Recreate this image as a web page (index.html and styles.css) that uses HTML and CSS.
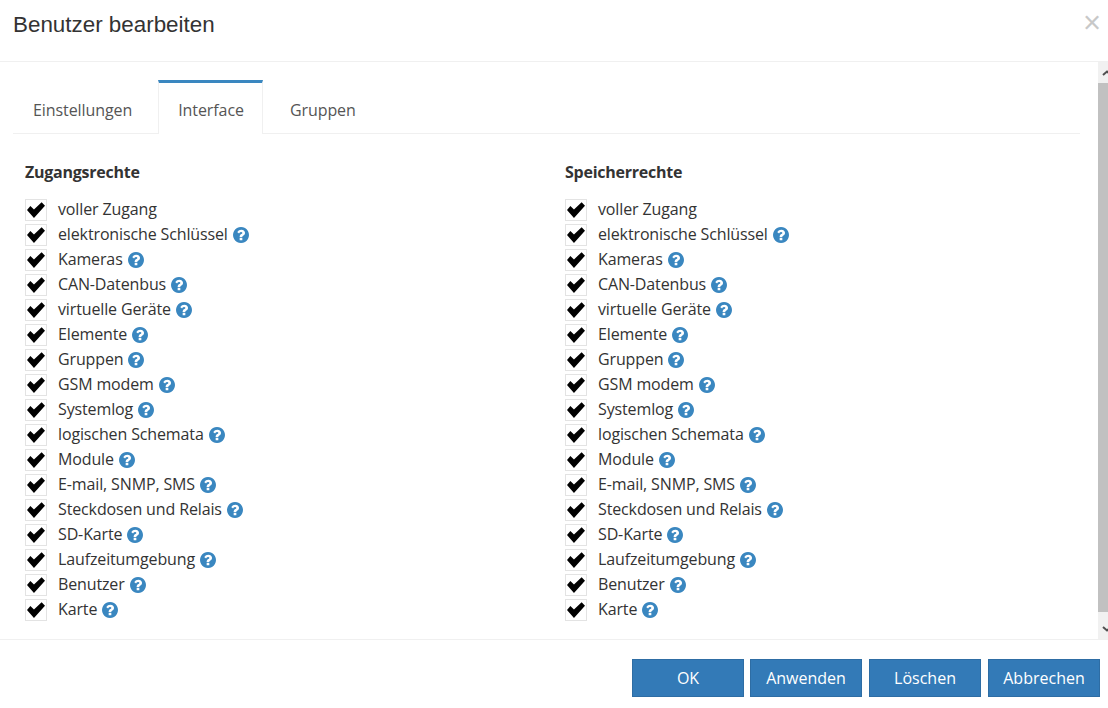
FILE: index.html
```html
<!DOCTYPE html>
<html lang="de">
<head>
<meta charset="utf-8">
<title>Benutzer bearbeiten</title>
<link rel="stylesheet" href="styles.css">
</head>
<body>
<svg class="defs" width="0" height="0" aria-hidden="true">
  <symbol id="help" viewBox="128 128 1536 1536">
    <path fill="#3a87c0" d="M1024 1376v-192q0-14-9-23t-23-9h-192q-14 0-23 9t-9 23v192q0 14 9 23t23 9h192q14 0 23-9t9-23zm256-672q0-88-55.500-163t-138.500-116-170-41q-243 0-371 213-15 24 8 42l132 100q7 6 19 6 16 0 25-12 53-68 86-92 34-24 86-24 48 0 85.500 26t37.500 59q0 38-20 61t-68 45q-63 28-115.500 86.500t-52.500 125.500v36q0 14 9 23t23 9h192q14 0 23-9t9-23q0-19 21.500-49.500t54.500-49.500q32-18 49-28.500t46-35 44.500-48 28-60.500 12.500-81zm384 192q0 209-103 385.500t-279.500 279.500-385.500 103-385.500-103-279.500-279.500-103-385.500 103-385.500 279.500-279.500 385.500-103 385.500 103 279.500 279.500 103 385.500z"/>
  </symbol>
  <symbol id="check" viewBox="0 0 16 14">
    <path d="M0 7 3 3.500 6.200 6.500 13 0 16 3.200 6.200 14z" fill="#000"/>
  </symbol>
</svg>
<div class="dialog">
  <header class="head">
    <h1 class="title">Benutzer bearbeiten</h1>
    <span class="close">×</span>
  </header>
  <main class="body">
    <div class="content">
      <nav class="tabs">
        <a class="tab">Einstellungen</a>
        <a class="tab active">Interface</a>
        <a class="tab">Gruppen</a>
      </nav>
      <div class="cols" id="cols">
        <section class="col">
          <h2 class="col-title">Zugangsrechte</h2>
          <ul class="list">
            <li class="row"><span class="box"><svg class="tick"><use href="#check"/></svg></span><span>voller Zugang</span></li>
            <li class="row"><span class="box"><svg class="tick"><use href="#check"/></svg></span><span>elektronische Schlüssel</span><svg class="help"><use href="#help"/></svg></li>
            <li class="row"><span class="box"><svg class="tick"><use href="#check"/></svg></span><span>Kameras</span><svg class="help"><use href="#help"/></svg></li>
            <li class="row"><span class="box"><svg class="tick"><use href="#check"/></svg></span><span>CAN-Datenbus</span><svg class="help"><use href="#help"/></svg></li>
            <li class="row"><span class="box"><svg class="tick"><use href="#check"/></svg></span><span>virtuelle Geräte</span><svg class="help"><use href="#help"/></svg></li>
            <li class="row"><span class="box"><svg class="tick"><use href="#check"/></svg></span><span>Elemente</span><svg class="help"><use href="#help"/></svg></li>
            <li class="row"><span class="box"><svg class="tick"><use href="#check"/></svg></span><span>Gruppen</span><svg class="help"><use href="#help"/></svg></li>
            <li class="row"><span class="box"><svg class="tick"><use href="#check"/></svg></span><span>GSM modem</span><svg class="help"><use href="#help"/></svg></li>
            <li class="row"><span class="box"><svg class="tick"><use href="#check"/></svg></span><span>Systemlog</span><svg class="help"><use href="#help"/></svg></li>
            <li class="row"><span class="box"><svg class="tick"><use href="#check"/></svg></span><span>logischen Schemata</span><svg class="help"><use href="#help"/></svg></li>
            <li class="row"><span class="box"><svg class="tick"><use href="#check"/></svg></span><span>Module</span><svg class="help"><use href="#help"/></svg></li>
            <li class="row"><span class="box"><svg class="tick"><use href="#check"/></svg></span><span>E-mail, SNMP, SMS</span><svg class="help"><use href="#help"/></svg></li>
            <li class="row"><span class="box"><svg class="tick"><use href="#check"/></svg></span><span>Steckdosen und Relais</span><svg class="help"><use href="#help"/></svg></li>
            <li class="row"><span class="box"><svg class="tick"><use href="#check"/></svg></span><span>SD-Karte</span><svg class="help"><use href="#help"/></svg></li>
            <li class="row"><span class="box"><svg class="tick"><use href="#check"/></svg></span><span>Laufzeitumgebung</span><svg class="help"><use href="#help"/></svg></li>
            <li class="row"><span class="box"><svg class="tick"><use href="#check"/></svg></span><span>Benutzer</span><svg class="help"><use href="#help"/></svg></li>
            <li class="row"><span class="box"><svg class="tick"><use href="#check"/></svg></span><span>Karte</span><svg class="help"><use href="#help"/></svg></li>
          </ul>
        </section>
        <section class="col">
          <h2 class="col-title">Speicherrechte</h2>
          <ul class="list">
            <li class="row"><span class="box"><svg class="tick"><use href="#check"/></svg></span><span>voller Zugang</span></li>
            <li class="row"><span class="box"><svg class="tick"><use href="#check"/></svg></span><span>elektronische Schlüssel</span><svg class="help"><use href="#help"/></svg></li>
            <li class="row"><span class="box"><svg class="tick"><use href="#check"/></svg></span><span>Kameras</span><svg class="help"><use href="#help"/></svg></li>
            <li class="row"><span class="box"><svg class="tick"><use href="#check"/></svg></span><span>CAN-Datenbus</span><svg class="help"><use href="#help"/></svg></li>
            <li class="row"><span class="box"><svg class="tick"><use href="#check"/></svg></span><span>virtuelle Geräte</span><svg class="help"><use href="#help"/></svg></li>
            <li class="row"><span class="box"><svg class="tick"><use href="#check"/></svg></span><span>Elemente</span><svg class="help"><use href="#help"/></svg></li>
            <li class="row"><span class="box"><svg class="tick"><use href="#check"/></svg></span><span>Gruppen</span><svg class="help"><use href="#help"/></svg></li>
            <li class="row"><span class="box"><svg class="tick"><use href="#check"/></svg></span><span>GSM modem</span><svg class="help"><use href="#help"/></svg></li>
            <li class="row"><span class="box"><svg class="tick"><use href="#check"/></svg></span><span>Systemlog</span><svg class="help"><use href="#help"/></svg></li>
            <li class="row"><span class="box"><svg class="tick"><use href="#check"/></svg></span><span>logischen Schemata</span><svg class="help"><use href="#help"/></svg></li>
            <li class="row"><span class="box"><svg class="tick"><use href="#check"/></svg></span><span>Module</span><svg class="help"><use href="#help"/></svg></li>
            <li class="row"><span class="box"><svg class="tick"><use href="#check"/></svg></span><span>E-mail, SNMP, SMS</span><svg class="help"><use href="#help"/></svg></li>
            <li class="row"><span class="box"><svg class="tick"><use href="#check"/></svg></span><span>Steckdosen und Relais</span><svg class="help"><use href="#help"/></svg></li>
            <li class="row"><span class="box"><svg class="tick"><use href="#check"/></svg></span><span>SD-Karte</span><svg class="help"><use href="#help"/></svg></li>
            <li class="row"><span class="box"><svg class="tick"><use href="#check"/></svg></span><span>Laufzeitumgebung</span><svg class="help"><use href="#help"/></svg></li>
            <li class="row"><span class="box"><svg class="tick"><use href="#check"/></svg></span><span>Benutzer</span><svg class="help"><use href="#help"/></svg></li>
            <li class="row"><span class="box"><svg class="tick"><use href="#check"/></svg></span><span>Karte</span><svg class="help"><use href="#help"/></svg></li>
          </ul>
        </section>
      </div>
    </div>
    <div class="scrollbar">
      <div class="sb-btn"><svg class="sb-arrow" viewBox="0 0 10 6"><path d="M1 5 5 1.500 9 5" fill="none" stroke="#505050" stroke-width="2"/></svg></div>
      <div class="sb-thumb"></div>
      <div class="sb-btn"><svg class="sb-arrow" viewBox="0 0 10 6"><path d="M1 1 5 4.500 9 1" fill="none" stroke="#505050" stroke-width="2"/></svg></div>
    </div>
  </main>
  <footer class="foot">
    <button class="btn">OK</button>
    <button class="btn">Anwenden</button>
    <button class="btn">Löschen</button>
    <button class="btn">Abbrechen</button>
  </footer>
</div>
</body>
</html>
```

FILE: styles.css
```css
html, body {
  margin: 0;
  padding: 0;
  height: 100%;
  overflow: hidden;
  background: #fff;
}
.defs { display: block; height: 0; }
.dialog {
  width: 1108px;
  height: 708px;
  display: flex;
  flex-direction: column;
  font-family: "Open Sans", sans-serif;
  font-size: 16px;
  color: #333;
}
.head {
  height: 61px;
  flex: none;
  border-bottom: 1px solid #f0f0f0;
  display: flex;
  justify-content: space-between;
  padding: 0 7px 0 13px;
}
.title {
  margin: 0;
  font-family: "Liberation Sans", Arial, sans-serif;
  font-size: 22.4px;
  font-weight: 400;
  line-height: 50px;
}
.close {
  font-family: "Liberation Sans", Arial, sans-serif;
  font-size: 31px;
  line-height: 46px;
  color: #c8c8c8;
}
.body {
  flex: none;
  height: 577px;
  display: flex;
  overflow: hidden;
}
.content {
  flex: 1;
  padding: 18px 18px 0 13px;
  min-width: 0;
}
.tabs {
  display: flex;
  gap: 7px;
  height: 54px;
  box-sizing: border-box;
  border-bottom: 1px solid #f0f0f0;
}
.tab {
  padding: 0 18px 0 19px;
  height: 54px;
  box-sizing: border-box;
  line-height: 54px;
  letter-spacing: -0.08px;
  color: #555;
  border: 1px solid transparent;
  border-width: 3px 1px 0;
}
.tab.active {
  background: #fff;
  border-color: #3a87c0 #f0f0f0 #fff;
}
.cols {
  display: grid;
  grid-template-columns: 540px 1fr;
  padding: 25px 0 0 12px;
}
.col-title {
  margin: 0 0 11px;
  font-size: 16px;
  font-weight: 700;
  line-height: 27px;
  letter-spacing: -0.25px;
  color: #333;
}
.list {
  list-style: none;
  margin: 0;
  padding: 0;
  letter-spacing: -0.13px;
}
.row {
  height: 25px;
  display: flex;
  align-items: center;
  line-height: 25px;
}
.box {
  width: 22px;
  height: 22px;
  box-sizing: border-box;
  border: 1px solid #e3e3e3;
  margin-right: 11px;
  display: flex;
  align-items: center;
  justify-content: center;
  flex: none;
}
.tick { width: 18px; height: 16px; }
.help {
  width: 16px;
  height: 16px;
  margin-left: 5px;
  flex: none;
}
.scrollbar {
  width: 10px;
  flex: none;
  background: #f1f1f1;
  display: flex;
  flex-direction: column;
}
.sb-btn {
  height: 21px;
  flex: none;
  display: flex;
  align-items: center;
  padding-left: 4px;
}
.sb-arrow { width: 10px; height: 6px; flex: none; }
.sb-thumb {
  flex: 1;
  background: #c1c1c1;
  margin-bottom: 6px;
}
.foot {
  flex: 1;
  border-top: 1px solid #f0f0f0;
  display: flex;
  justify-content: flex-end;
  align-items: flex-start;
  gap: 6px;
  padding: 19px 8px 0 0;
}
.btn {
  width: 112px;
  height: 38px;
  padding: 0;
  font-family: "Open Sans", sans-serif;
  font-size: 16px;
  color: #fff;
  background: #337ab7;
  border: 1px solid #2e6da4;
  border-radius: 0;
}
.btn:nth-child(n+3) { margin-left: 1px; }
```
